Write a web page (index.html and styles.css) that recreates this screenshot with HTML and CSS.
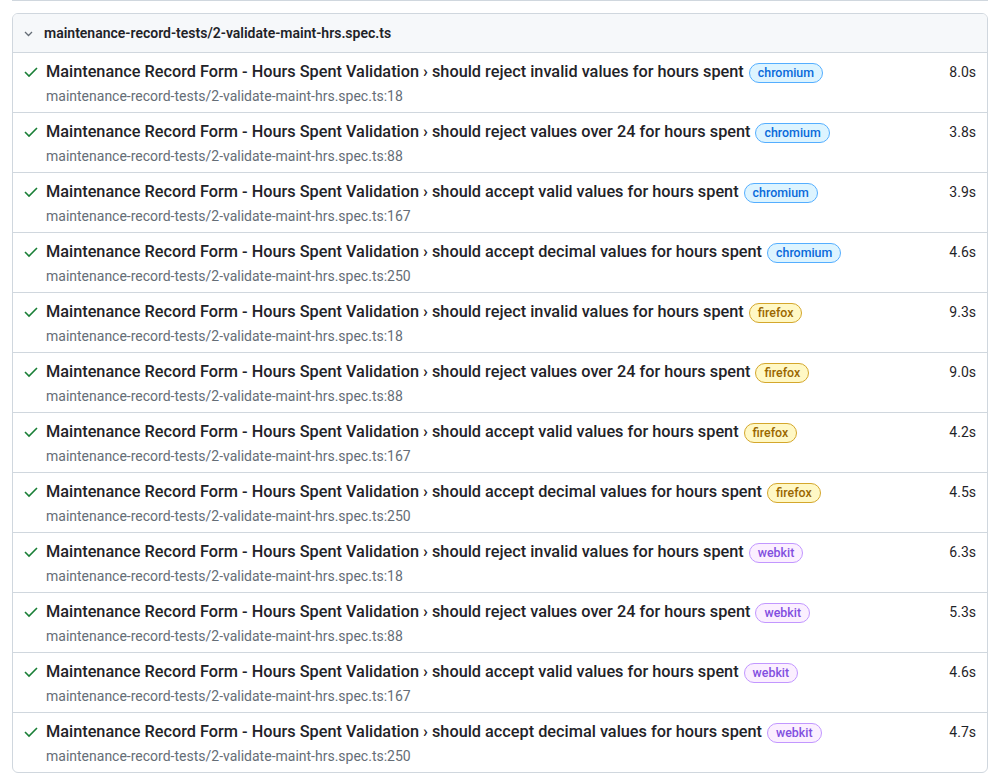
FILE: index.html
```html
<!DOCTYPE html>
<html>
<head>
<meta charset="utf-8">
<link rel="stylesheet" href="styles.css">
</head>
<body>
<div class="prev"></div>
<div class="card">
  <div class="card-header">
    <svg class="chev" viewBox="0 0 14 14" width="14" height="14"><polyline points="2,5 5.5,8.5 9,5"/></svg>
    <span class="file">maintenance-record-tests/2-validate-maint-hrs.spec.ts</span>
  </div>

  <div class="row">
    <svg class="ok" viewBox="0 0 16 16" width="16" height="16"><polyline points="2,7 6,11 14,3"/></svg>
    <div class="body"><div class="title">Maintenance Record Form - Hours Spent Validation › should reject invalid values for hours spent<span class="tag chromium">chromium</span></div><div class="loc">maintenance-record-tests/2-validate-maint-hrs.spec.ts:18</div></div>
    <div class="dur">8.0s</div>
  </div>
  <div class="row">
    <svg class="ok" viewBox="0 0 16 16" width="16" height="16"><polyline points="2,7 6,11 14,3"/></svg>
    <div class="body"><div class="title">Maintenance Record Form - Hours Spent Validation › should reject values over 24 for hours spent<span class="tag chromium">chromium</span></div><div class="loc">maintenance-record-tests/2-validate-maint-hrs.spec.ts:88</div></div>
    <div class="dur">3.8s</div>
  </div>
  <div class="row">
    <svg class="ok" viewBox="0 0 16 16" width="16" height="16"><polyline points="2,7 6,11 14,3"/></svg>
    <div class="body"><div class="title">Maintenance Record Form - Hours Spent Validation › should accept valid values for hours spent<span class="tag chromium">chromium</span></div><div class="loc">maintenance-record-tests/2-validate-maint-hrs.spec.ts:167</div></div>
    <div class="dur">3.9s</div>
  </div>
  <div class="row">
    <svg class="ok" viewBox="0 0 16 16" width="16" height="16"><polyline points="2,7 6,11 14,3"/></svg>
    <div class="body"><div class="title">Maintenance Record Form - Hours Spent Validation › should accept decimal values for hours spent<span class="tag chromium">chromium</span></div><div class="loc">maintenance-record-tests/2-validate-maint-hrs.spec.ts:250</div></div>
    <div class="dur">4.6s</div>
  </div>

  <div class="row">
    <svg class="ok" viewBox="0 0 16 16" width="16" height="16"><polyline points="2,7 6,11 14,3"/></svg>
    <div class="body"><div class="title">Maintenance Record Form - Hours Spent Validation › should reject invalid values for hours spent<span class="tag firefox">firefox</span></div><div class="loc">maintenance-record-tests/2-validate-maint-hrs.spec.ts:18</div></div>
    <div class="dur">9.3s</div>
  </div>
  <div class="row">
    <svg class="ok" viewBox="0 0 16 16" width="16" height="16"><polyline points="2,7 6,11 14,3"/></svg>
    <div class="body"><div class="title">Maintenance Record Form - Hours Spent Validation › should reject values over 24 for hours spent<span class="tag firefox">firefox</span></div><div class="loc">maintenance-record-tests/2-validate-maint-hrs.spec.ts:88</div></div>
    <div class="dur">9.0s</div>
  </div>
  <div class="row">
    <svg class="ok" viewBox="0 0 16 16" width="16" height="16"><polyline points="2,7 6,11 14,3"/></svg>
    <div class="body"><div class="title">Maintenance Record Form - Hours Spent Validation › should accept valid values for hours spent<span class="tag firefox">firefox</span></div><div class="loc">maintenance-record-tests/2-validate-maint-hrs.spec.ts:167</div></div>
    <div class="dur">4.2s</div>
  </div>
  <div class="row">
    <svg class="ok" viewBox="0 0 16 16" width="16" height="16"><polyline points="2,7 6,11 14,3"/></svg>
    <div class="body"><div class="title">Maintenance Record Form - Hours Spent Validation › should accept decimal values for hours spent<span class="tag firefox">firefox</span></div><div class="loc">maintenance-record-tests/2-validate-maint-hrs.spec.ts:250</div></div>
    <div class="dur">4.5s</div>
  </div>

  <div class="row">
    <svg class="ok" viewBox="0 0 16 16" width="16" height="16"><polyline points="2,7 6,11 14,3"/></svg>
    <div class="body"><div class="title">Maintenance Record Form - Hours Spent Validation › should reject invalid values for hours spent<span class="tag webkit">webkit</span></div><div class="loc">maintenance-record-tests/2-validate-maint-hrs.spec.ts:18</div></div>
    <div class="dur">6.3s</div>
  </div>
  <div class="row">
    <svg class="ok" viewBox="0 0 16 16" width="16" height="16"><polyline points="2,7 6,11 14,3"/></svg>
    <div class="body"><div class="title">Maintenance Record Form - Hours Spent Validation › should reject values over 24 for hours spent<span class="tag webkit">webkit</span></div><div class="loc">maintenance-record-tests/2-validate-maint-hrs.spec.ts:88</div></div>
    <div class="dur">5.3s</div>
  </div>
  <div class="row">
    <svg class="ok" viewBox="0 0 16 16" width="16" height="16"><polyline points="2,7 6,11 14,3"/></svg>
    <div class="body"><div class="title">Maintenance Record Form - Hours Spent Validation › should accept valid values for hours spent<span class="tag webkit">webkit</span></div><div class="loc">maintenance-record-tests/2-validate-maint-hrs.spec.ts:167</div></div>
    <div class="dur">4.6s</div>
  </div>
  <div class="row">
    <svg class="ok" viewBox="0 0 16 16" width="16" height="16"><polyline points="2,7 6,11 14,3"/></svg>
    <div class="body"><div class="title">Maintenance Record Form - Hours Spent Validation › should accept decimal values for hours spent<span class="tag webkit">webkit</span></div><div class="loc">maintenance-record-tests/2-validate-maint-hrs.spec.ts:250</div></div>
    <div class="dur">4.7s</div>
  </div>
</div>
</body>
</html>
```
FILE: styles.css
```css
html, body {
  margin: 0;
  padding: 0;
  background: #ffffff;
}
body {
  font-family: Roboto, "Liberation Sans", sans-serif;
  color: #1f2328;
  padding: 0 6px 0 12px;
}
.prev {
  height: 1px;
  background: #d0d7de;
  margin-bottom: 12px;
}
.card {
  border: 1px solid #d0d7de;
  border-radius: 6px;
  overflow: hidden;
}
.card-header {
  height: 38px;
  background: #f6f8fa;
  display: flex;
  align-items: center;
  padding-left: 10px;
}
.chev {
  width: 14px;
  height: 14px;
  fill: none;
  stroke: #656d76;
  stroke-width: 1.3;
  margin-right: 7px;
  margin-top: 2px;
  flex: none;
}
.file {
  font-size: 14px;
  font-weight: 600;
  color: #1f2328;
}
.row {
  display: flex;
  align-items: flex-start;
  border-top: 1px solid #d0d7de;
  height: 60px;
  box-sizing: border-box;
  padding: 7px 11px 0 10px;
}
.ok {
  width: 16px;
  height: 16px;
  fill: none;
  stroke: #1a7f37;
  stroke-width: 1.6;
  margin-top: 5px;
  margin-right: 7px;
  flex: none;
}
.body {
  flex: 1;
  min-width: 0;
}
.title {
  font-size: 16.3px;
  font-weight: 500;
  line-height: 24px;
  white-space: nowrap;
  color: #1f2328;
}
.tag {
  display: inline-block;
  font-size: 12.4px;
  font-weight: 500;
  line-height: 18px;
  padding: 0 8px;
  border: 1px solid;
  border-radius: 12px;
  margin-left: 5px;
  vertical-align: 0;
}
.chromium {
  background: #ddf4ff;
  border-color: #54aeff;
  color: #0969da;
}
.firefox {
  background: #fff8c5;
  border-color: #d4a72c;
  color: #9a6700;
}
.webkit {
  background: #fbefff;
  border-color: #c297ff;
  color: #8250df;
}
.loc {
  font-size: 14px;
  line-height: 20px;
  color: #656d76;
  margin-top: 2px;
}
.dur {
  font-size: 14px;
  line-height: 24px;
  color: #1f2328;
  flex: none;
  margin-left: 12px;
}
```
